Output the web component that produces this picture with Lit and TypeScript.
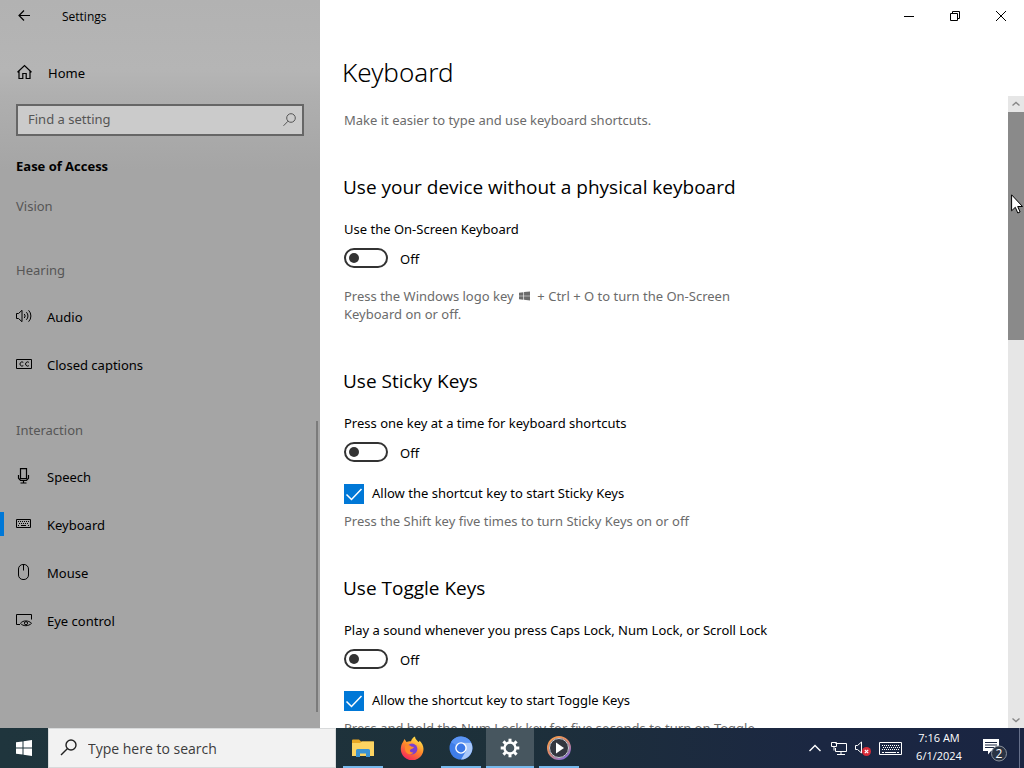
import { LitElement, html, css, svg, nothing, TemplateResult } from "lit";
import { customElement, property } from "lit/decorators.js";

const line = (body: TemplateResult, w = 16, h = 16) => html`<svg
  width=${w} height=${h} viewBox="0 0 ${w} ${h}" fill="none" stroke="currentColor"
  stroke-width="1" aria-hidden="true">${body}</svg>`;

const icons: Record<string, () => TemplateResult> = {
  back: () => line(svg`<path stroke-width="1.2" d="M14 8.500H3M8 3.500l-5 5 5 5"/>`),
  home: () => line(svg`<path stroke-width="1.2" d="M1.500 8.200L8.500 1.500l7 6.700M3 7v7.500h3.800V9.500h3.400v5H14V7"/>`),
  search: () => line(svg`<circle cx="10" cy="6" r="4.300"/><path d="M7 9.200L2.500 13.800"/>`),
  audio: () => line(svg`<path d="M.5 5.500h2L6 2.300v11.400L2.500 10.500h-2zM8.300 6a3 3 0 0 1 0 4M10.400 4.200a5.400 5.400 0 0 1 0 7.600M12.600 2.300a8.200 8.200 0 0 1 0 11.400"/>`),
  captions: () => line(svg`<path d="M.5 3.500h15v9H.5z"/><path d="M7.300 6.300A2.100 2.100 0 1 0 7.300 9.700M12.900 6.300A2.100 2.100 0 1 0 12.900 9.700"/>`),
  speech: () => line(svg`<path stroke-width="1.2" d="M4.500 .6h6v10h-6z"/><path stroke-width="1.2" d="M2.500 7v3.200L4.500 12.500h6l2-2.300V7M7.500 12.500v2.500M4.500 15h6"/>`),
  keyboard: () => line(svg`<path d="M.5 3.500h14v8H.5z"/><path stroke-dasharray="1 1" d="M2 5.500h11M3 7.500h10M2 9.500h2M12 9.500h2"/><path d="M5 9.500h5"/>`),
  mouse: () => line(svg`<rect x="2.500" y="0.500" width="10" height="15" rx="4.500"/><path d="M7.500 1v5.500"/>`),
  eye: () => line(svg`<path d="M4 12.500H.5v-10h15v5"/><path d="M4.500 11.300c2.500-3.200 8-3.200 11 0-3 3.200-8.500 3.200-11 0z"/><circle cx="10" cy="11.200" r="1.600"/>`),
  min: () => line(svg`<path d="M3 8.500h10"/>`),
  restore: () => line(svg`<path d="M3.500 5.500h7v7h-7zM5.500 5.500v-2h7v7h-2"/>`),
  close: () => line(svg`<path d="M3 3l10 10M13 3L3 13"/>`),
  up: () => line(svg`<path stroke-width="1.400" d="M4.500 9.500L8 6.500l3.500 3"/>`),
  down: () => line(svg`<path stroke-width="1.400" d="M4.500 6.500L8 9.500l3.500-3"/>`),
  check: () => line(svg`<path stroke-width="1.500" d="M2.500 10.500l5 5 10-10.500"/>`, 20, 20),
  winkey: () => html`<svg width="11" height="10" viewBox="0 0 12 10" fill="currentColor" role="img" aria-label="Windows"><path d="M0 1.400L4.800.8v3.800H0zM5.500.7L12 0v4.600H5.500zM0 5.300h4.800v3.800L0 8.500zM5.500 5.300H12V10l-6.500-.8z"/></svg>`,
  start: () => html`<svg width="16" height="16" viewBox="0 0 16 16" fill="#fff" aria-hidden="true"><path d="M0 2.300L6.500 1.400v6.100H0zM7.500 1.300L16 0v7.500H7.500zM0 8.500h6.500v6.100L0 13.700zM7.500 8.500H16V16l-8.500-1.200z"/></svg>`,
  find: () => line(svg`<circle cx="11" cy="6" r="5" stroke-width="1.400"/><path stroke-width="1.400" d="M7.300 9.700L1 16"/>`, 18, 18),
  explorer: () => html`<svg width="24" height="24" viewBox="0 0 24 24" aria-hidden="true"><path d="M1 4.500a1 1 0 0 1 1-1h6l2 2h12a1 1 0 0 1 1 1V20H1z" fill="#e9a825"/><path d="M1 7h8l2-1.500h12V20H1z" fill="#fcd462"/><path d="M5 21v-6.500A1.500 1.500 0 0 1 6.500 13h11a1.500 1.500 0 0 1 1.500 1.500V21h-4v-3.500H9V21z" fill="#3a93d2"/></svg>`,
  firefox: () => html`<svg width="24" height="24" viewBox="0 0 24 24" aria-hidden="true">
    <defs><linearGradient id="fx" x1=".8" y1=".1" x2=".3" y2="1"><stop offset="0" stop-color="#ffe14a"/><stop offset=".45" stop-color="#ff8a2a"/><stop offset="1" stop-color="#f5245c"/></linearGradient></defs>
    <path fill="url(#fx)" d="M3 6l1.500-3 2 3c1.500-.8 3-1 4.500-.8C11.500 3 13 1.500 15 .5c0 2.500 2 3.500 3.500 5.500 1-.3 1-1 1-1.500 2.500 2.500 4 5.500 4 8.500a11.300 11.300 0 0 1-22.700 0c0-2.500.7-5 2.200-7z"/>
    <circle cx="12" cy="13" r="5.400" fill="#7a3fd0"/><path fill="#ff8a2a" d="M5 10c2-1.500 4-1.500 6 .2 1 .8 2.500.3 3 1-1 1.800-3 1.300-4 2.800-.5 1.500 1 3 3.500 2.500-2 3-8 2-8.500-3z"/></svg>`,
  chromium: () => html`<svg width="24" height="24" viewBox="0 0 24 24" aria-hidden="true"><circle cx="12" cy="12" r="11.500" fill="#3f7de8"/><path d="M12 6.500h10A11.500 11.500 0 0 1 12 23.500l5-8.500z" fill="#a9c8fa"/><path d="M2 6.300A11.500 11.500 0 0 1 22 6.500H12L7 9z" fill="#5b95f5"/><circle cx="12" cy="12" r="5.800" fill="#fff"/><circle cx="12" cy="12" r="4.400" fill="#3b78e7"/></svg>`,
  gear: () => html`<svg width="20" height="20" viewBox="-10 -10 20 20" fill="none" stroke="#fff" aria-hidden="true"><circle r="5.500" stroke-width="2.400"/>${[0, 45, 90, 135, 180, 225, 270, 315].map((a) => svg`<path transform="rotate(${a})" d="M0-6v-3.300" stroke-width="3"/>`)}</svg>`,
  media: () => html`<svg width="26" height="26" viewBox="0 0 26 26" aria-hidden="true"><defs><linearGradient id="md" x1="0" y1="0" x2=".7" y2="1"><stop offset="0" stop-color="#f7a14b"/><stop offset=".5" stop-color="#e08a6a"/><stop offset="1" stop-color="#8a6fd0"/></linearGradient></defs><circle cx="13" cy="13" r="11" fill="#33363f" stroke="url(#md)" stroke-width="2"/><circle cx="13" cy="13" r="9.500" fill="none" stroke="#c9ccd6" stroke-width="1"/><path d="M10 7.500l8 5.500-8 5.500z" fill="#fff"/></svg>`,
  caret: () => line(svg`<path stroke-width="1.400" d="M2.500 11L8 5.500l5.500 5.500"/>`),
  network: () => line(svg`<path d="M4.500 3.500h11v8h-11V8M10 11.500v3M6 14.500h8M.5 2.500h5v4h-5zM3 6.500v4"/>`),
  volume: () => html`<svg width="18" height="16" viewBox="0 0 18 16" fill="none" stroke="#fff" aria-hidden="true"><path d="M1.500 5.500h2l4-3.500v11l-4-3.500h-2z"/><circle cx="12.500" cy="11.500" r="4.500" fill="#d92b38" stroke="none"/><path d="M10.800 9.800l3.400 3.400m0-3.400l-3.400 3.400" stroke-width="1.200"/></svg>`,
  touch: () => line(svg`<path d="M.5 1.500h22v12H.5z"/><path stroke-dasharray="1 1" d="M3 4.500h18M4 6.500h17M3 8.500h18"/><path d="M3 11.500h2M6 11.500h11M18 11.500h2"/>`, 23, 15),
  notify: () => html`<svg width="26" height="26" viewBox="0 0 26 26" aria-hidden="true"><path d="M1 3h16v12H9l-3 3.500V15H1z" fill="#fff"/><path d="M3 6.500h12M3 9h12M3 11.500h9" stroke="#1b2742"/><circle cx="17" cy="17.500" r="7.500" fill="#2b3444" stroke="#8a919c"/><text x="17" y="22" text-anchor="middle" font-size="12" fill="#fff">2</text></svg>`,
};

@customElement("ui-icon")
class UiIcon extends LitElement {
  static styles = css`:host { display: inline-flex; flex: none; } svg { display: block; }`;
  @property() name = "";
  render() { return icons[this.name]?.() ?? nothing; }
}

@customElement("toggle-setting")
class ToggleSetting extends LitElement {
  static styles = css`
    :host { display: block; }
    .caption { display: block; line-height: 18px; }
    .row { display: flex; align-items: center; gap: 12px; margin-top: 10px; height: 20px; }
    .switch {
      appearance: none; box-sizing: border-box; width: 44px; height: 20px; margin: 0; padding: 3px;
      border: 2px solid #333; border-radius: 10px; display: flex; align-items: center;
    }
    .switch::before { content: ""; width: 10px; height: 10px; border-radius: 50%; background: #333; }
    .switch:checked { background: #0078d7; border-color: #0078d7; justify-content: flex-end; }
    .switch:checked::before { background: #fff; }
    .state { line-height: 20px; padding-top: 2px; }
  `;
  @property() label = "";
  render() {
    return html`<label class="caption" for="switch">${this.label}</label>
      <div class="row"><input class="switch" id="switch" type="checkbox" role="switch" /><span class="state">Off</span></div>`;
  }
}

@customElement("check-setting")
class CheckSetting extends LitElement {
  static styles = css`
    :host { display: block; }
    .row { display: flex; gap: 8px; height: 20px; line-height: 18px; }
    .box { display: grid; color: #fff; }
    .box > * { grid-area: 1 / 1; }
    input { appearance: none; width: 20px; height: 20px; margin: 0; background: #0078d7; }
    ui-icon { pointer-events: none; }
  `;
  @property() label = "";
  render() {
    return html`<label class="row"><span class="box"><input type="checkbox" checked /><ui-icon name="check"></ui-icon></span>${this.label}</label>`;
  }
}

@customElement("settings-nav")
class SettingsNav extends LitElement {
  static styles = css`
    :host {
      display: flex; flex-direction: column; flex: 0 0 320px; min-height: 0; color: #000;
      background: linear-gradient(#b2b2b2, #b5b5b5 70px, #afafaf 96px, #a5a5a5 170px);
    }
    .bar { display: flex; align-items: center; height: 32px; font: 12px "Open Sans", sans-serif; }
    .bar button { width: 48px; height: 32px; padding: 0 16px; border: 0; background: none; color: inherit; }
    .title { padding-left: 14px; }
    .scroll { flex: 1; min-height: 0; display: flex; position: relative; overflow: hidden; }
    .list { flex: 1; }
    a { display: flex; align-items: center; gap: 15px; height: 48px; padding: 0 0 4px 16px; box-sizing: border-box; color: inherit; text-decoration: none; }
    a span { padding-top: 2px; }
    .home { margin-top: 18px; gap: 16px; }
    .current { background: linear-gradient(#0078d7, #0078d7) 0 10px / 4px 24px no-repeat; }
    .search { display: flex; align-items: center; height: 32px; margin: 6px 16px 14px; box-sizing: border-box; border: 2px solid #666; background: #cbcbcb; padding: 0 5px 0 10px; color: #555; }
    input { flex: 1; min-width: 0; height: 28px; box-sizing: border-box; border: 0; padding: 0 0 2px; background: none; font: inherit; color: inherit; outline: none; }
    input::placeholder { color: #555; opacity: 1; }
    h1 { margin: 0; padding-left: 16px; font: 700 13px/32px "Open Sans", sans-serif; }
    h2 { margin: 0 0 16px; padding-left: 16px; font-size: inherit; font-weight: 400; line-height: 48px; color: #565656; }
    ul { margin: 0 0 16px; padding: 0; list-style: none; }
    h2.group { margin: 0; }
    .thumb { position: absolute; right: 2px; bottom: 16px; width: 2px; height: 291px; background: #7b7b7b; }
  `;
  private groups = [
    { name: "Hearing", items: [["audio", "Audio"], ["captions", "Closed captions"]] },
    { name: "Interaction", items: [["speech", "Speech"], ["keyboard", "Keyboard"], ["mouse", "Mouse"], ["eye", "Eye control"]] },
  ];
  render() {
    return html`
      <div class="bar"><button aria-label="Back"><ui-icon name="back"></ui-icon></button><span class="title">Settings</span></div>
      <a class="home" href="#home"><ui-icon name="home"></ui-icon><span>Home</span></a>
      <div class="search"><input type="text" placeholder="Find a setting" aria-label="Find a setting" /><ui-icon name="search"></ui-icon></div>
      <h1>Ease of Access</h1>
      <div class="scroll"><nav class="list">
        <h2>Vision</h2>
        ${this.groups.map((g) => html`<h2 class="group">${g.name}</h2><ul>${g.items.map(([icon, text]) => html`
          <li><a href="#${icon}" class=${text === "Keyboard" ? "current" : ""}><ui-icon name=${icon}></ui-icon><span>${text}</span></a></li>`)}</ul>`)}
      </nav><div class="thumb"></div></div>`;
  }
}

@customElement("settings-page")
class SettingsPage extends LitElement {
  static styles = css`
    :host { display: flex; flex-direction: column; flex: 1; min-width: 0; min-height: 0; background: #fff; color: #000; }
    .window { display: flex; justify-content: flex-end; height: 32px; }
    .window button { width: 46px; border: 0; padding: 2px 15px 0; background: none; color: inherit; }
    h1 { margin: 20px 0 4px; padding-left: 22px; font: 300 26px/40px "Noto Sans", sans-serif; }
    .area { flex: 1; min-height: 0; display: flex; }
    .content { flex: 1; min-width: 0; overflow: hidden; padding: 15px 24px 0; }
    p { margin: 0; line-height: 18px; color: #6b6b6b; max-width: 430px; }
    p ui-icon { margin: 0 4px 0 2px; }
    h2 { margin: 44px 0 19px -1px; font: 400 19px/28px "Open Sans", sans-serif; }
    .below-toggle { margin-top: 19px; }
    check-setting { margin: 22px 0 8px; }
    .scrollbar { flex: 0 0 16px; display: flex; flex-direction: column; background: #e6e6e6; color: #888; }
    .scrollbar button { height: 16px; border: 0; padding: 0; background: none; color: inherit; }
    .thumb { height: 228px; background: #8a8a8a; }
    .space { flex: 1; }
  `;
  render() {
    return html`
      <div class="window">
        <button aria-label="Minimize"><ui-icon name="min"></ui-icon></button>
        <button aria-label="Restore"><ui-icon name="restore"></ui-icon></button>
        <button aria-label="Close"><ui-icon name="close"></ui-icon></button>
      </div>
      <h1>Keyboard</h1>
      <div class="area"><main class="content">
        <p>Make it easier to type and use keyboard shortcuts.</p>
        <h2>Use your device without a physical keyboard</h2>
        <toggle-setting label="Use the On-Screen Keyboard"></toggle-setting>
        <p class="below-toggle">Press the Windows logo key <ui-icon name="winkey"></ui-icon> + Ctrl + O to turn the On-Screen Keyboard on or off.</p>
        <h2>Use Sticky Keys</h2>
        <toggle-setting label="Press one key at a time for keyboard shortcuts"></toggle-setting>
        <check-setting label="Allow the shortcut key to start Sticky Keys"></check-setting>
        <p>Press the Shift key five times to turn Sticky Keys on or off</p>
        <h2>Use Toggle Keys</h2>
        <toggle-setting label="Play a sound whenever you press Caps Lock, Num Lock, or Scroll Lock"></toggle-setting>
        <check-setting label="Allow the shortcut key to start Toggle Keys"></check-setting>
        <p>Press and hold the Num Lock key for five seconds to turn on Toggle Keys</p>
      </main>
      <div class="scrollbar"><button aria-label="Scroll up"><ui-icon name="up"></ui-icon></button><div class="thumb"></div><div class="space"></div><button aria-label="Scroll down"><ui-icon name="down"></ui-icon></button></div></div>`;
  }
}

@customElement("task-bar")
class TaskBar extends LitElement {
  static styles = css`
    :host { display: flex; flex: 0 0 40px; font: 14px "Open Sans", sans-serif; background: linear-gradient(90deg, #1f353d, #1d303a 50%, #1b2742 80%, #1a2542); color: #fff; }
    button { border: 0; padding: 0; background: none; color: inherit; font: inherit; display: flex; align-items: center; justify-content: center; }
    .start { width: 48px; }
    .search { flex: 0 0 288px; box-sizing: border-box; border: 1px solid #d8dadb; background: #f2f2f2; display: flex; align-items: center; gap: 10px; padding-left: 11px; color: #222; }
    input { flex: 1; min-width: 0; border: 0; padding: 0; outline: none; background: none; font: inherit; color: inherit; }
    input::placeholder { color: #3c3c3c; opacity: 1; }
    .apps { display: flex; gap: 1px; padding-left: 3px; flex: 1; }
    .apps button { width: 48px; background: linear-gradient(#76b9ed, #76b9ed) center bottom / 40px 2px no-repeat; }
    .apps .idle { background: none; }
    .apps .active { background: linear-gradient(#76b9ed, #76b9ed) center bottom / 48px 2px no-repeat, #47565f; }
    .tray { display: flex; }
    .tray button { width: 24px; }
    .tray .touch { width: 32px; padding-right: 2px; }
    .tray .clock { width: 64px; display: block; font-size: 11px; line-height: 18px; padding-bottom: 2px; text-align: center; }
    .tray .notify { width: 48px; padding-top: 2px; }
    .tray .desktop { width: 5px; border-left: 1px solid #66708a; box-sizing: border-box; }
  `;
  render() {
    return html`
      <button class="start" aria-label="Start"><ui-icon name="start"></ui-icon></button>
      <div class="search"><ui-icon name="find"></ui-icon><input type="text" placeholder="Type here to search" aria-label="Type here to search" /></div>
      <div class="apps">
        <button aria-label="File Explorer"><ui-icon name="explorer"></ui-icon></button>
        <button class="idle" aria-label="Firefox"><ui-icon name="firefox"></ui-icon></button>
        <button aria-label="Chromium"><ui-icon name="chromium"></ui-icon></button>
        <button class="active" aria-label="Settings"><ui-icon name="gear"></ui-icon></button>
        <button aria-label="Media Player"><ui-icon name="media"></ui-icon></button>
      </div>
      <div class="tray">
        <button aria-label="Hidden icons"><ui-icon name="caret"></ui-icon></button>
        <button aria-label="Network"><ui-icon name="network"></ui-icon></button>
        <button aria-label="Volume"><ui-icon name="volume"></ui-icon></button>
        <button class="touch" aria-label="Touch keyboard"><ui-icon name="touch"></ui-icon></button>
        <button class="clock">7:16 AM<br />6/1/2024</button>
        <button class="notify" aria-label="Notifications"><ui-icon name="notify"></ui-icon></button>
        <button class="desktop" aria-label="Show desktop"></button>
      </div>`;
  }
}

@customElement("app-root")
class AppRoot extends LitElement {
  static styles = css`
    :host { display: flex; flex-direction: column; position: relative; height: 100vh; overflow: hidden; font: 13px "Noto Sans", "Open Sans", sans-serif; }
    .window { flex: 1; min-height: 0; display: flex; }
    .pointer { position: absolute; right: 1px; top: 194px; pointer-events: none; }
  `;
  render() {
    return html`<div class="window"><settings-nav></settings-nav><settings-page></settings-page></div>
      <task-bar></task-bar>
      <svg class="pointer" width="12" height="20" viewBox="0 0 12 20" aria-hidden="true"><path d="M.6.800v16l3.700-3.500 2.500 5.700 2.300-1-2.400-5.500h4.800z" fill="#fff" stroke="#000"/></svg>`;
  }
}
